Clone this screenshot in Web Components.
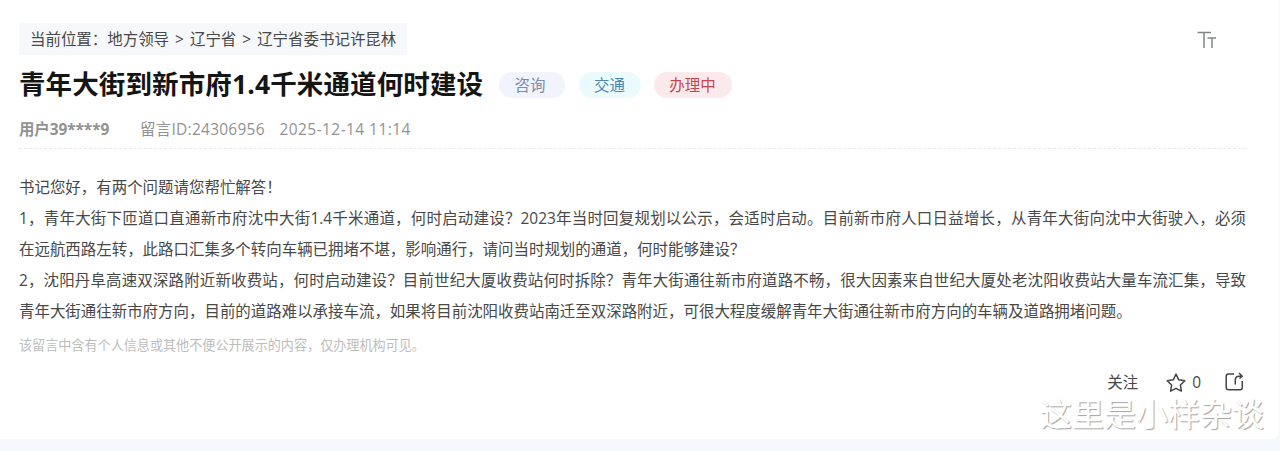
<!DOCTYPE html>
<html lang="zh-CN">
<head>
<meta charset="utf-8">
<title>留言详情</title>
<style>
  body {
    margin: 0;
    height: 451px;
    overflow: hidden;
    background: #f5f8fc;
    color: #484848;
    font: 15.46px/31px "Open Sans", "Noto Sans CJK SC", sans-serif;
  }
</style>
</head>
<body>
<message-card>
  <bread-crumb slot="top">当前位置：地方领导 &gt; 辽宁省 &gt; 辽宁省委书记许昆林</bread-crumb>
  <font-size-button slot="top"></font-size-button>
  <message-title>
    青年大街到新市府1.4千米通道何时建设
    <message-tag slot="tags" style="--w: 66px; --shift: -4px; --bg: #f1f4fc; --fg: #7d8daa">咨询</message-tag>
    <message-tag slot="tags" style="--w: 62px; --bg: #ebfbfd; --fg: #4c86b2">交通</message-tag>
    <message-tag slot="tags" style="--w: 78px; --shift: -1px; --bg: #fce9eb; --fg: #c6464f">办理中</message-tag>
  </message-title>
  <message-meta>
    <span slot="user">用户39****9</span>
    <span slot="id">留言ID:24306956</span>
    <span slot="date">2025-12-14 11:14</span>
  </message-meta>
  <message-body>
    <text-line>书记您好，有两个问题请您帮忙解答！</text-line>
    <text-line full>1，青年大街下匝道口直通新市府沈中大街1.4千米通道，何时启动建设？2023年当时回复规划以公示，会适时启动。目前新市府人口日益增长，从青年大街向沈中大街驶入，必须</text-line>
    <text-line>在远航西路左转，此路口汇集多个转向车辆已拥堵不堪，影响通行，请问当时规划的通道，何时能够建设？</text-line>
    <text-line full>2，沈阳丹阜高速双深路附近新收费站，何时启动建设？目前世纪大厦收费站何时拆除？青年大街通往新市府道路不畅，很大因素来自世纪大厦处老沈阳收费站大量车流汇集，导致</text-line>
    <text-line>青年大街通往新市府方向，目前的道路难以承接车流，如果将目前沈阳收费站南迁至双深路附近，可很大程度缓解青年大街通往新市府方向的车辆及道路拥堵问题。</text-line>
    <span slot="note">该留言中含有个人信息或其他不便公开展示的内容，仅办理机构可见。</span>
  </message-body>
  <message-actions count="0">关注</message-actions>
</message-card>
<author-mark>这里是小样杂谈</author-mark>

<script>
/**
 * Base class: renders the subclass template into an open shadow root.
 */
class BaseElement extends HTMLElement {
  constructor () {
    super();
    this.attachShadow({ mode: 'open' });
  }

  connectedCallback () {
    this.shadowRoot.innerHTML = this.render();
  }
}

customElements.define('message-card', class extends BaseElement {
  render () {
    return `
    <style>
      :host {
        display: flex;
        flex-direction: column;
        box-sizing: border-box;
        width: 1279px;
        height: 439px;
        padding: 23px 33px 0 19px;
        background: #fff;
        border-radius: 0 0 8px 0;
      }

      .top {
        display: flex;
        justify-content: space-between;
        height: 32px;
      }
    </style>
    <div class="top"><slot name="top"></slot></div>
    <slot></slot>`;
  }
});

customElements.define('bread-crumb', class extends BaseElement {
  render () {
    return `
    <style>
      :host {
        display: block;
        box-sizing: border-box;
        width: 388px;
        height: 32px;
        padding-left: 11px;
        background: #f6f8fb;
        line-height: 32px;
        white-space: nowrap;
        word-spacing: 2px;
      }
    </style>
    <slot></slot>`;
  }
});

customElements.define('font-size-button', class extends BaseElement {
  render () {
    return `
    <style>
      :host { display: block; padding: 8px 29px 0 0; height: 18px; }
      svg { display: block; }
    </style>
    <svg width="20" height="18" fill="none" stroke="#818684" stroke-width="1.5">
      <path d="M0.5 1.5H14M7 1.5V17M10.5 7H19M15 7V17"/>
    </svg>`;
  }
});

customElements.define('message-title', class extends BaseElement {
  render () {
    return `
    <style>
      :host {
        display: flex;
        align-items: center;
        height: 59px;
        gap: 16px;
      }

      h1 {
        margin: 0;
        width: 464px;
        color: #151515;
        font-size: 26.5px;
        font-weight: 700;
        letter-spacing: 0.12px;
        line-height: 59px;
        white-space: nowrap;
      }

      .tags { display: flex; gap: 13.5px; }
    </style>
    <h1><slot></slot></h1>
    <div class="tags"><slot name="tags"></slot></div>`;
  }
});

customElements.define('message-tag', class extends BaseElement {
  render () {
    return `
    <style>
      :host {
        display: block;
        width: var(--w);
        height: 26px;
        border-radius: 13px;
        background: var(--bg);
        color: var(--fg);
        line-height: 26px;
        text-align: center;
        text-indent: var(--shift, 0);
      }
    </style>
    <slot></slot>`;
  }
});

customElements.define('message-meta', class extends BaseElement {
  render () {
    return `
    <style>
      :host {
        display: flex;
        box-sizing: border-box;
        height: 35px;
        border-bottom: 1px dashed #e8e8e8;
        color: #929292;
        line-height: 31px;
        white-space: nowrap;
      }

      .user { width: 121px; font-weight: 700; letter-spacing: -0.1px; }
      .id { width: 139.5px; letter-spacing: 0.28px; }
      .date { letter-spacing: 0.45px; }
    </style>
    <div class="user"><slot name="user"></slot></div>
    <div class="id"><slot name="id"></slot></div>
    <div class="date"><slot name="date"></slot></div>`;
  }
});

customElements.define('message-body', class extends BaseElement {
  render () {
    return `
    <style>
      :host { display: block; height: 218px; padding-top: 23px; box-sizing: border-box; }

      .note {
        color: #bdbdbd;
        font-size: 13.1px;
        line-height: 36px;
      }
    </style>
    <slot></slot>
    <div class="note"><slot name="note"></slot></div>`;
  }
});

customElements.define('text-line', class extends BaseElement {
  render () {
    return `
    <style>
      :host { display: block; height: 31px; white-space: nowrap; }
      /* full lines run out to the right margin */
      :host([full]) {
        white-space: normal;
        letter-spacing: -0.05px;
        text-align: justify;
        text-align-last: justify;
      }
    </style>
    <slot></slot>`;
  }
});

customElements.define('message-actions', class extends BaseElement {
  render () {
    return `
    <style>
      :host {
        display: flex;
        justify-content: flex-end;
        align-items: center;
        height: 31px;
        padding-right: 2px;
      }

      .star { margin: 0 6px 0 28px; }
      .share { margin: -2px 0 0 24px; }
      svg { display: block; fill: none; stroke: #444; stroke-width: 1.5; stroke-linejoin: round; }
    </style>
    <slot></slot>
    <svg class="star" width="20" height="20">
      <path d="M10 1.2L12.7 6.8L18.8 7.7L14.4 12L15.4 18.1L10 15.3L4.6 18.1L5.6 12L1.2 7.7L7.3 6.8Z"/>
    </svg>
    <span>${this.getAttribute('count')}</span>
    <svg class="share" width="19" height="19">
      <path d="M9 2H3.5Q1.2 2 1.2 4.3V15.5Q1.2 17.8 3.5 17.8H15Q17.3 17.8 17.3 15.5V9M10.3 12.5V8Q10.3 4.2 14 4.2H16.5M14 1L17.3 4.2L14.5 6.5"/>
    </svg>`;
  }
});

customElements.define('author-mark', class extends BaseElement {
  render () {
    return `
    <style>
      :host {
        position: absolute;
        right: 16px;
        bottom: 18px;
        color: #fff;
        font-size: 32px;
        line-height: 38px;
        white-space: nowrap;
        text-shadow: 1px 1px 1px #a2a2a2;
      }
    </style>
    <slot></slot>`;
  }
});
</script>
</body>
</html>
